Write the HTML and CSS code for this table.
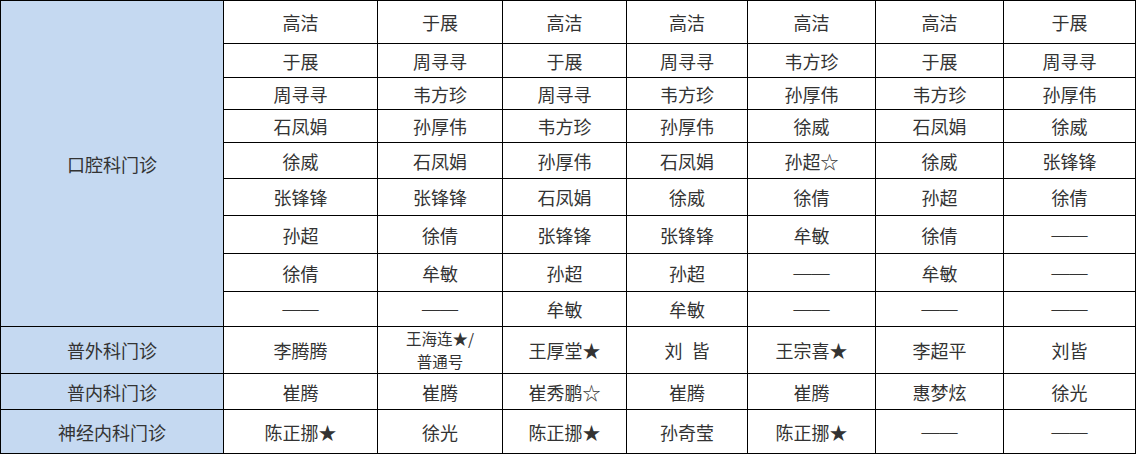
FILE: index.html
```html
<!DOCTYPE html>
<html lang="zh-CN">
<head>
<meta charset="utf-8">
<title>门诊排班</title>
<link rel="stylesheet" href="styles.css">
</head>
<body>
<table class="roster">
  <colgroup>
    <col class="c-dept">
    <col class="c1"><col class="c2"><col class="c3"><col class="c4"><col class="c5"><col class="c6"><col class="c7">
  </colgroup>
  <tbody>
    <tr class="r1"><td class="dept" rowspan="9">口腔科门诊</td><td>高洁</td><td>于展</td><td>高洁</td><td>高洁</td><td>高洁</td><td>高洁</td><td>于展</td></tr>
    <tr class="r2"><td>于展</td><td>周寻寻</td><td>于展</td><td>周寻寻</td><td>韦方珍</td><td>于展</td><td>周寻寻</td></tr>
    <tr class="r3"><td>周寻寻</td><td>韦方珍</td><td>周寻寻</td><td>韦方珍</td><td>孙厚伟</td><td>韦方珍</td><td>孙厚伟</td></tr>
    <tr class="r4"><td>石凤娟</td><td>孙厚伟</td><td>韦方珍</td><td>孙厚伟</td><td>徐威</td><td>石凤娟</td><td>徐威</td></tr>
    <tr class="r5"><td>徐威</td><td>石凤娟</td><td>孙厚伟</td><td>石凤娟</td><td>孙超☆</td><td>徐威</td><td>张锋锋</td></tr>
    <tr class="r6"><td>张锋锋</td><td>张锋锋</td><td>石凤娟</td><td>徐威</td><td>徐倩</td><td>孙超</td><td>徐倩</td></tr>
    <tr class="r7"><td>孙超</td><td>徐倩</td><td>张锋锋</td><td>张锋锋</td><td>牟敏</td><td>徐倩</td><td class="dash">——</td></tr>
    <tr class="r8"><td>徐倩</td><td>牟敏</td><td>孙超</td><td>孙超</td><td class="dash">——</td><td>牟敏</td><td class="dash">——</td></tr>
    <tr class="r9"><td class="dash">——</td><td class="dash">——</td><td>牟敏</td><td>牟敏</td><td class="dash">——</td><td class="dash">——</td><td class="dash">——</td></tr>
    <tr class="r10"><td class="dept">普外科门诊</td><td>李腾腾</td><td class="two"><span class="ln">王海连★/</span><span class="ln">普通号</span></td><td>王厚堂★</td><td>刘&ensp;皆</td><td>王宗喜★</td><td>李超平</td><td>刘皆</td></tr>
    <tr class="r11"><td class="dept">普内科门诊</td><td>崔腾</td><td>崔腾</td><td>崔秀鹏☆</td><td>崔腾</td><td>崔腾</td><td>惠梦炫</td><td>徐光</td></tr>
    <tr class="r12"><td class="dept">神经内科门诊</td><td>陈正挪★</td><td>徐光</td><td>陈正挪★</td><td>孙奇莹</td><td>陈正挪★</td><td class="dash">——</td><td class="dash">——</td></tr>
  </tbody>
</table>
</body>
</html>
```

FILE: styles.css
```css
html, body {
  margin: 0;
  padding: 0;
  background: #ffffff;
}

.roster {
  border-collapse: collapse;
  table-layout: fixed;
  width: 1136px;
  font-family: "Noto Sans CJK SC", "Noto Sans", sans-serif;
  font-size: 18px;
  color: #333333;
}

.roster td {
  border: 1px solid #000000;
  padding: 0;
  text-align: center;
  vertical-align: middle;
  line-height: 22px;
  white-space: nowrap;
}

.roster td.dept {
  background: #c5d9f1;
}

.roster td.two {
  font-size: 15.5px;
  line-height: 23px;
}

.roster td.two .ln {
  display: block;
}

.roster td.dash {
  font-family: "Liberation Serif", serif;
}

.c-dept { width: 223px; }
.c1 { width: 154px; }
.c2 { width: 125px; }
.c3 { width: 124px; }
.c4 { width: 121px; }
.c5 { width: 128px; }
.c6 { width: 128px; }
.c7 { width: 132px; }

.r1 { height: 43px; }
.r2 { height: 34px; }
.r3 { height: 32px; }
.r4 { height: 33px; }
.r5 { height: 36px; }
.r6 { height: 37px; }
.r7 { height: 38px; }
.r8 { height: 38px; }
.r9 { height: 35px; }
.r10 { height: 46px; }
.r11 { height: 36px; }
.r12 { height: 44px; }
```
